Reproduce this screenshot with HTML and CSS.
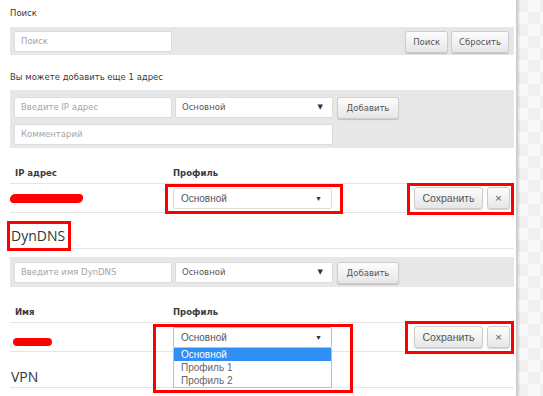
FILE: index.html
```html
<!DOCTYPE html>
<html lang="ru">
<head>
    <meta charset="UTF-8">
    <title>Адреса</title>
    <link rel="stylesheet" href="styles.css">
</head>
<body>
    <div class="page">
        <div class="label">Поиск</div>
        <div class="panel search">
            <div class="input wide">Поиск</div>
            <div class="btns">
                <span class="btn">Поиск</span>
                <span class="btn">Сбросить</span>
            </div>
        </div>

        <div class="label second">Вы можете добавить еще 1 адрес</div>
        <div class="panel add">
            <div class="line">
                <div class="input">Введите IP адрес</div>
                <div class="select"><span>Основной</span><i class="caret">▼</i></div>
                <span class="btn">Добавить</span>
            </div>
            <div class="input comment">Комментарий</div>
        </div>

        <div class="table">
            <div class="th first">IP адрес</div>
            <div class="th">Профиль</div>
            <div class="th"></div>
            <div class="td"><span class="scribble s1"></span></div>
            <div class="td"><div class="select row"><span>Основной</span><i class="caret">▼</i></div></div>
            <div class="td right">
                <span class="btn save">Сохранить</span>
                <span class="btn close">×</span>
            </div>
        </div>

        <h2 class="title">DynDNS</h2>
        <div class="panel dyn">
            <div class="line">
                <div class="input">Введите имя DynDNS</div>
                <div class="select"><span>Основной</span><i class="caret">▼</i></div>
                <span class="btn">Добавить</span>
            </div>
        </div>

        <div class="table">
            <div class="th first">Имя</div>
            <div class="th">Профиль</div>
            <div class="th"></div>
            <div class="td"><span class="scribble s2"></span></div>
            <div class="td">
                <div class="select row open"><span>Основной</span><i class="caret">▼</i>
                    <ul class="options">
                        <li class="on">Основной</li>
                        <li>Профиль 1</li>
                        <li>Профиль 2</li>
                    </ul>
                </div>
            </div>
            <div class="td right">
                <span class="btn save">Сохранить</span>
                <span class="btn close">×</span>
            </div>
        </div>

        <h2 class="title vpn">VPN</h2>

        <!-- red annotation frames -->
        <div class="mark m1"></div>
        <div class="mark m2"></div>
        <div class="mark m3"></div>
        <div class="mark m4"></div>
        <div class="mark m5"></div>
    </div>
</body>
</html>
```

FILE: styles.css
```css
body{
    margin: 0;
    background-color: #f4f4f4;
    background-image: repeating-conic-gradient(#f0f0f0 0 25%, #f8f8f8 0 50%);
    background-size: 24px 24px;
    font-family: "DejaVu Sans", Verdana, sans-serif;
    font-size: 8.5px;
    color: #3a3a3a;
}

.page{
    position: relative;
    width: 504px;
    height: 396px;
    padding: 0 2px 0 10px;
    background: #fff;
    border-right: 2px solid #cfcfcf;
    box-shadow: 1px 0 2px rgba(0,0,0,.12);
    overflow: hidden;
}

.label{
    padding-top: 6px;
    line-height: 14px;
    margin-bottom: 7px;
}

.label.second{
    padding-top: 15px;
    margin-bottom: 6px;
}

/* серые панели с полями */
.panel{
    background: #e7e7e7;
    padding: 4px 5px 2px 4px;
}

.search{
    display: flex;
    justify-content: space-between;
    align-items: flex-start;
}

.add{
    padding: 7px 4px 3px;
}

.dyn{
    margin-top: 8px;
    padding: 5px 4px 3px;
}

.line{
    display: flex;
    align-items: flex-start;
    gap: 3px;
}

.line .btn{
    margin-left: 1px;
    width: 62px;
}

.input,
.select{
    box-sizing: border-box;
    height: 21px;
    width: 158px;
    line-height: 19px;
    padding: 0 6px;
    background: #fff;
    border: 1px solid #dcdcdc;
    border-radius: 2px;
    color: #a5a5a5;
}

.comment{
    width: 319px;
    margin-top: 5px;
}

.select{
    position: relative;
    display: flex;
    justify-content: space-between;
    color: #555;
}

.caret{
    font-style: normal;
    font-size: 7px;
    color: #333;
    margin-right: 3px;
}

.btns{
    display: flex;
    gap: 3px;
}

.btn{
    box-sizing: border-box;
    display: inline-block;
    height: 22px;
    line-height: 20px;
    padding: 0 7px;
    text-align: center;
    color: #555;
    background: linear-gradient(#fdfdfd, #e6e6e6);
    border: 1px solid #cdcdcd;
    border-radius: 3px;
    box-shadow: 0 1px 1px rgba(0,0,0,.18);
}

/* таблицы */
.table{
    display: grid;
    grid-template-columns: 163px 1fr auto;
    margin-top: 16px;
}

.th{
    height: 19px;
    line-height: 19px;
    font-weight: bold;
    border-bottom: 1px solid #e6e6e6;
}

.th.first{
    padding-left: 5px;
}

.td{
    height: 28px;
    display: flex;
    align-items: center;
    border-bottom: 1px solid #e6e6e6;
}

.td.right{
    justify-content: flex-end;
    gap: 4px;
    padding-right: 4px;
}

.select.row{
    width: 159px;
    font-family: "Liberation Sans", Arial, sans-serif;
    font-size: 10px;
    padding-left: 7px;
}

.select.open{
    border-color: #a9c2ea;
}

.save{
    width: 69px;
    font-family: "Liberation Sans", Arial, sans-serif;
    font-size: 10.5px;
}

.close{
    width: 23px;
    padding: 0;
    font-size: 9px;
}

.scribble{
    display: block;
    background: #ff0000;
    border-radius: 5px;
}

.s1{
    width: 73px;
    height: 9px;
    margin-top: 1px;
    transform: skewX(-12deg);
}

.s2{
    width: 39px;
    height: 8px;
    margin: 10px 0 0 3px;
}

.options{
    position: absolute;
    top: 20px;
    left: -1px;
    width: 159px;
    margin: 0;
    padding: 0;
    list-style: none;
    background: #fff;
    border: 1px solid #a9c2ea;
    border-top: 0;
    box-sizing: border-box;
    height: 40px;
    z-index: 2;
}

.options li{
    line-height: 13px;
    padding-left: 7px;
    color: #666;
}

.options li.on{
    background: #2f8ff5;
    color: #fff;
}

.title{
    margin: 0;
    padding: 13px 0 2px 1px;
    line-height: 20px;
    font-family: "Open Sans", sans-serif;
    font-weight: normal;
    font-size: 14px;
    color: #333;
    border-bottom: 1px solid #e6e6e6;
}

.title.vpn{
    padding-top: 15px;
    padding-bottom: 0;
}

/* красные рамки поверх страницы */
.mark{
    position: absolute;
    box-sizing: border-box;
    border: 3px solid #f00;
    z-index: 3;
}

.m1{ left: 165px; top: 184px; width: 178px; height: 30px; }
.m2{ left: 407px; top: 183px; width: 107px; height: 32px; }
.m3{ left: 7px; top: 221px; width: 64px; height: 30px; }
.m4{ left: 405px; top: 321px; width: 109px; height: 33px; }
.m5{ left: 153px; top: 324px; width: 200px; height: 69px; }
```
